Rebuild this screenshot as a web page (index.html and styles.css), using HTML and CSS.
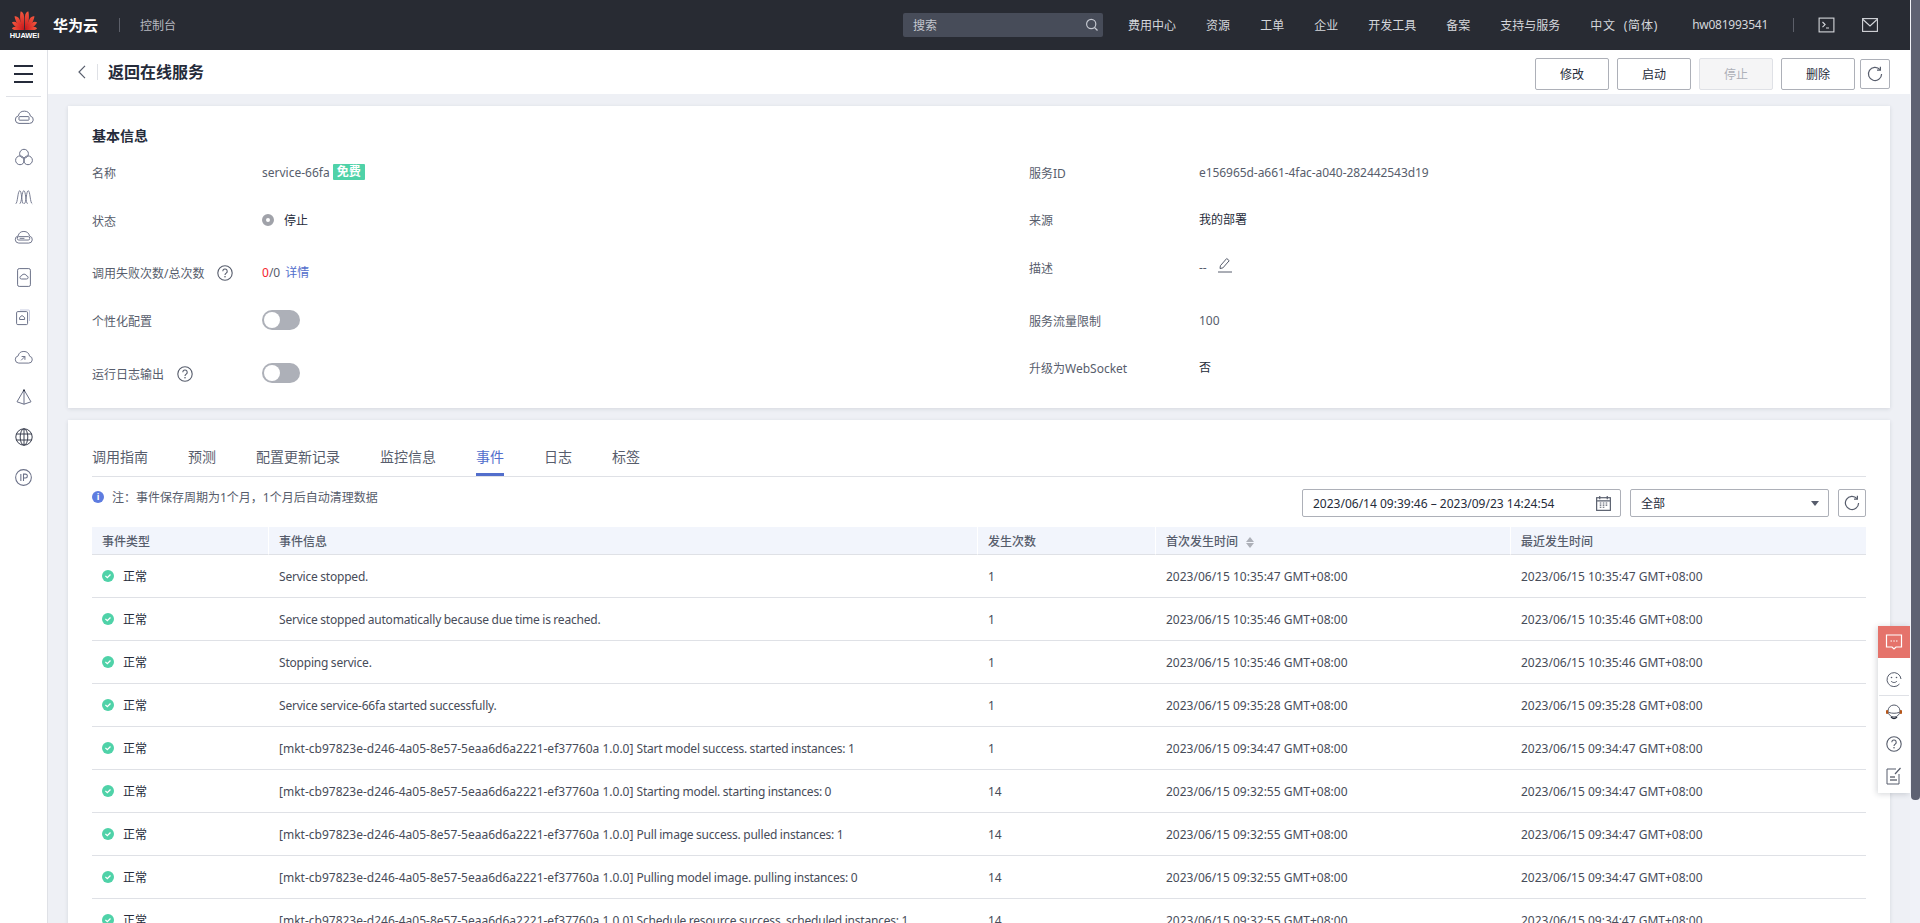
FILE: index.html
```html
<!DOCTYPE html>
<html lang="zh-CN">
<head>
<meta charset="utf-8">
<title>返回在线服务</title>
<link rel="stylesheet" href="styles.css">
</head>
<body>
<svg class="defs" width="0" height="0" aria-hidden="true">
  <symbol id="i-help" viewBox="0 0 16 16"><circle cx="8" cy="8" r="7.2" fill="none" stroke="currentColor" stroke-width="1.1"/><path d="M5.8 6.2a2.2 2.2 0 1 1 3.4 1.9c-.8.5-1.2.9-1.2 1.9" fill="none" stroke="currentColor" stroke-width="1.1"/><circle cx="8" cy="11.8" r=".8" fill="currentColor"/></symbol>
  <symbol id="i-ok" viewBox="0 0 12 12"><circle cx="6" cy="6" r="6" fill="#4fd2a8"/><path d="M3.4 5.9l1.9 1.8 3.2-3.2" fill="none" stroke="#fff" stroke-width="1.3"/></symbol>
  <symbol id="i-refresh" viewBox="0 0 16 16"><path d="M13 3.6A6.6 6.6 0 1 0 14.6 8" fill="none" stroke="currentColor" stroke-width="1.2"/><path d="M13.4 .8v3.4H10" fill="none" stroke="currentColor" stroke-width="1.2"/></symbol>
  <linearGradient id="petal" x1="0" y1="1" x2="0" y2="0"><stop offset="0" stop-color="#c8141a"/><stop offset="1" stop-color="#f4583f"/></linearGradient>
</svg>
<div class="app">
  <div class="page">
    <header class="topbar">
      <div class="brand">
        <div class="logo">
          <svg class="logo-mark" viewBox="-12.5 -19 25 19" width="25" height="19">
            <g fill="url(#petal)">
              <path d="M-.3 0C-3.300-5-3.400-12-1-18.800.2-18.800 2-16.500 1.700-13.500 1.300-9-.1-4-.3 0z" transform="rotate(-9)"/>
              <path d="M.3 0C3.300-5 3.400-12 1-18.800-.2-18.800-2-16.500-1.700-13.500-1.300-9 .1-4 .3 0z" transform="rotate(9)"/>
              <path d="M-.3 0C-3.300-4.500-3.400-10.500-1-16.800.2-16.800 2-14.500 1.700-12 1.300-8-.1-4-.3 0z" transform="rotate(-33)"/>
              <path d="M.3 0C3.300-4.500 3.400-10.500 1-16.800-.2-16.800-2-14.500-1.700-12-1.300-8 .1-4 .3 0z" transform="rotate(33)"/>
              <path d="M-.3 0C-3-4-3.100-9-1-14.500.2-14.500 2-12.500 1.700-10 1.300-7-.1-3.500-.3 0z" transform="rotate(-56)"/>
              <path d="M.3 0C3-4 3.100-9 1-14.500-.2-14.500-2-12.500-1.700-10-1.300-7 .1-3.500 .3 0z" transform="rotate(56)"/>
              <path d="M-.3 0C-2.600-3.500-2.700-7.500-1-12.500.2-12.500 1.800-10.500 1.500-8.500 1.200-5.500-.1-3-.3 0z" transform="rotate(-80)"/>
              <path d="M.3 0C2.600-3.500 2.700-7.500 1-12.500-.2-12.500-1.800-10.500-1.500-8.500-1.200-5.500 .1-3 .3 0z" transform="rotate(80)"/>
            </g>
          </svg>
          <span class="logo-text">HUAWEI</span>
        </div>
        <span class="brand-name">华为云</span>
        <span class="brand-sep"></span>
        <span class="brand-sub">控制台</span>
      </div>
      <div class="top-right">
        <div class="search">
          <span>搜索</span>
          <svg viewBox="0 0 14 14" width="14" height="14"><circle cx="6.200" cy="6" r="4.600" fill="none" stroke="#c4c7cf" stroke-width="1.200"/><path d="M9.500 9.500l3 3" stroke="#c4c7cf" stroke-width="1.200"/></svg>
        </div>
        <nav class="topnav">
          <a>费用中心</a><a>资源</a><a>工单</a><a>企业</a><a>开发工具</a><a>备案</a><a>支持与服务</a><a class="lang">中文 (简体)</a><a class="user">hw081993541</a>
        </nav>
        <span class="top-sep"></span>
        <svg class="top-ic" viewBox="0 0 16 16" width="17" height="16"><rect x=".6" y="1.100" width="14.800" height="13.800" fill="none" stroke="#d5d7dc" stroke-width="1.100"/><path d="M4 5l2.600 2.600L4 10.200M7.500 11h3" fill="none" stroke="#d5d7dc" stroke-width="1.100"/></svg>
        <svg class="top-ic mail" viewBox="0 0 16 16" width="16" height="16"><rect x=".6" y="1.600" width="14.800" height="12.800" fill="none" stroke="#d5d7dc" stroke-width="1.100"/><path d="M1 2.500l7 6.500 7-6.500" fill="none" stroke="#d5d7dc" stroke-width="1.100"/></svg>
      </div>
    </header>
    <div class="body-row">
      <aside class="sidebar">
        <div class="burger"><span></span><span></span><span></span></div>
        <div class="side-icons">
          <svg viewBox="0 0 20 14" width="20" height="14"><path d="M5 13.400h10.500a3.700 3.700 0 0 0 .9-7.300 6.200 6.200 0 0 0-12.100-.2A3.800 3.800 0 0 0 5 13.400z"/><rect x="5" y="6.600" width="10" height="3.600" rx=".5"/></svg>
          <svg viewBox="0 0 18 18" width="18" height="18"><circle cx="9" cy="5.700" r="4.400"/><circle cx="5" cy="12.300" r="4.400"/><circle cx="13" cy="12.300" r="4.400"/></svg>
          <svg viewBox="0 0 20 16" width="18" height="16"><path d="M.8 15.500C3 15 3 1 5.300 1s2 14 4 14.500M5.300 15.500C7.500 15 7.500 1 9.800 1s2 14 4.200 14.500M10.300 15.500C12.500 15 12.500 1 14.700 1s2 14 4.500 14.500"/></svg>
          <svg viewBox="0 0 20 14" width="19" height="14"><path d="M5 13.400h10.500a3.700 3.700 0 0 0 .9-7.300 6.200 6.200 0 0 0-12.100-.2A3.800 3.800 0 0 0 5 13.400z"/><rect x="3.500" y="6.600" width="13" height="3.600" rx="1.500"/><path d="M6 8.400h5"/></svg>
          <svg viewBox="0 0 14 19" width="14" height="19"><rect x=".6" y=".6" width="12.800" height="17.800" rx="1.600"/><path d="M4.500 11h5a1.500 1.500 0 0 0 .2-3 2.800 2.800 0 0 0-5.300 0 1.500 1.500 0 0 0 .1 3z"/></svg>
          <svg viewBox="0 0 16 16" width="16" height="16"><path d="M4 1h8.500a1 1 0 0 1 1 1v10" class="pale"/><rect x=".6" y="2.600" width="11" height="13" rx="1.200"/><path d="M3.600 10.500h5V8.500L6 6.500 3.600 8.500z"/></svg>
          <svg viewBox="0 0 20 14" width="19" height="14"><path d="M5 13.400h10.500a3.700 3.700 0 0 0 .9-7.300 6.200 6.200 0 0 0-12.100-.2A3.800 3.800 0 0 0 5 13.400z"/><path d="M7.500 10.500l4-4M8 6.500h3.500V10"/></svg>
          <svg viewBox="0 0 16 16" width="16" height="16"><path d="M8 .8L1 12.800 8 15.200l7-2.400zM8 .8v14.400"/><circle cx="8" cy="1.500" r="1" class="solid"/></svg>
          <svg viewBox="0 0 18 18" width="18" height="18"><circle cx="9" cy="9" r="8.200" class="dark"/><ellipse cx="9" cy="9" rx="3.800" ry="8.200" class="dark"/><path d="M1 6h16M1 12h16M9 1v16" class="dark"/></svg>
          <svg viewBox="0 0 16 16" width="17" height="17"><circle cx="8" cy="8" r="7.400"/><path d="M5.500 4.800v6.400M8 11.200V4.800h1.800a1.800 1.800 0 0 1 0 3.700H8"/></svg>
        </div>
      </aside>
      <main class="content">
        <div class="subhead">
          <div class="subhead-left">
            <svg class="chev" viewBox="0 0 8 14" width="8" height="14"><path d="M7 .8L1 7l6 6.200" fill="none" stroke="#575d6c" stroke-width="1.200"/></svg>
            <span class="chev-sep"></span>
            <h1 class="title">返回在线服务</h1>
          </div>
          <div class="actions">
            <button class="btn">修改</button>
            <button class="btn">启动</button>
            <button class="btn btn-off">停止</button>
            <button class="btn">删除</button>
            <button class="btn-ic btn-ic-head"><svg width="16" height="16"><use href="#i-refresh"/></svg></button>
          </div>
        </div>

        <section class="card info">
          <h2 class="card-title">基本信息</h2>
          <div class="info-grid">
            <div class="col col-l">
              <div class="kv"><span class="k">名称</span><span class="v">service-66fa<em class="tag">免费</em></span></div>
              <div class="kv"><span class="k">状态</span><span class="v v-dark"><i class="dot"></i>停止</span></div>
              <div class="kv"><span class="k k-help">调用失败次数/总次数<svg class="help" width="16" height="16"><use href="#i-help"/></svg></span><span class="v"><b class="red">0</b>/0<a class="link">详情</a></span></div>
              <div class="kv"><span class="k">个性化配置</span><span class="v v-sw"><i class="switch"></i></span></div>
              <div class="kv"><span class="k k-help">运行日志输出<svg class="help" width="16" height="16"><use href="#i-help"/></svg></span><span class="v v-sw"><i class="switch"></i></span></div>
            </div>
            <div class="col col-r">
              <div class="kv"><span class="k">服务ID</span><span class="v v-id">e156965d-a661-4fac-a040-282442543d19</span></div>
              <div class="kv"><span class="k">来源</span><span class="v v-dark">我的部署</span></div>
              <div class="kv"><span class="k">描述</span><span class="v">--<svg class="pen" viewBox="0 0 14 16" width="14" height="16"><path d="M2 11.500l.4-2.800L8.700 1.500l2.500 2.200-6.300 7.200z" fill="none" stroke="#575d6c"/><path d="M0 15h14" stroke="#575d6c"/></svg></span></div>
              <div class="kv"><span class="k">服务流量限制</span><span class="v">100</span></div>
              <div class="kv"><span class="k">升级为WebSocket</span><span class="v v-dark">否</span></div>
            </div>
          </div>
        </section>

        <section class="card events">
          <div class="tabs">
            <a>调用指南</a><a>预测</a><a>配置更新记录</a><a>监控信息</a><a class="active">事件</a><a>日志</a><a>标签</a>
          </div>
          <div class="toolbar">
            <div class="note"><i class="note-ic">i</i>注：事件保存周期为1个月，1个月后自动清理数据</div>
            <div class="filters">
              <div class="field date"><span>2023/06/14 09:39:46 – 2023/09/23 14:24:54</span>
                <svg viewBox="0 0 14 14" width="15" height="15"><rect x=".6" y="1.600" width="12.800" height="11.800" fill="none" stroke="#575d6c" stroke-width="1.100"/><path d="M3.500 0v3M10.500 0v3M1 4.500h12" stroke="#575d6c" stroke-width="1.100"/><path d="M3.500 6.500h1.500M6.300 6.500h1.500M9 6.500h1.500M3.500 8.500h1.500M6.300 8.500h1.500M9 8.500h1.500M3.500 10.500h1.500M6.300 10.500h1.500" stroke="#575d6c"/></svg>
              </div>
              <div class="field select"><span>全部</span><i class="caret"></i></div>
              <button class="btn-ic btn-ic-tool"><svg width="16" height="16"><use href="#i-refresh"/></svg></button>
            </div>
          </div>
          <table class="grid">
            <colgroup><col class="c1"><col class="c2"><col class="c3"><col class="c4"><col class="c5"></colgroup>
            <thead>
              <tr><th>事件类型</th><th>事件信息</th><th>发生次数</th><th>首次发生时间<i class="sort"></i></th><th>最近发生时间</th></tr>
            </thead>
            <tbody>
              <tr><td><span class="ok"><svg width="12" height="12"><use href="#i-ok"/></svg>正常</span></td><td><span class="prose">Service stopped.</span></td><td>1</td><td>2023/06/15 10:35:47 GMT+08:00</td><td>2023/06/15 10:35:47 GMT+08:00</td></tr>
              <tr><td><span class="ok"><svg width="12" height="12"><use href="#i-ok"/></svg>正常</span></td><td><span class="prose">Service stopped automatically because due time is reached.</span></td><td>1</td><td>2023/06/15 10:35:46 GMT+08:00</td><td>2023/06/15 10:35:46 GMT+08:00</td></tr>
              <tr><td><span class="ok"><svg width="12" height="12"><use href="#i-ok"/></svg>正常</span></td><td><span class="prose">Stopping service.</span></td><td>1</td><td>2023/06/15 10:35:46 GMT+08:00</td><td>2023/06/15 10:35:46 GMT+08:00</td></tr>
              <tr><td><span class="ok"><svg width="12" height="12"><use href="#i-ok"/></svg>正常</span></td><td><span class="prose">Service service-66fa started successfully.</span></td><td>1</td><td>2023/06/15 09:35:28 GMT+08:00</td><td>2023/06/15 09:35:28 GMT+08:00</td></tr>
              <tr><td><span class="ok"><svg width="12" height="12"><use href="#i-ok"/></svg>正常</span></td><td>[mkt-cb97823e-d246-4a05-8e57-5eaa6d6a2221-ef37760a 1.0.0] <span class="prose">Start model success. started instances: 1</span></td><td>1</td><td>2023/06/15 09:34:47 GMT+08:00</td><td>2023/06/15 09:34:47 GMT+08:00</td></tr>
              <tr><td><span class="ok"><svg width="12" height="12"><use href="#i-ok"/></svg>正常</span></td><td>[mkt-cb97823e-d246-4a05-8e57-5eaa6d6a2221-ef37760a 1.0.0] <span class="prose">Starting model. starting instances: 0</span></td><td>14</td><td>2023/06/15 09:32:55 GMT+08:00</td><td>2023/06/15 09:34:47 GMT+08:00</td></tr>
              <tr><td><span class="ok"><svg width="12" height="12"><use href="#i-ok"/></svg>正常</span></td><td>[mkt-cb97823e-d246-4a05-8e57-5eaa6d6a2221-ef37760a 1.0.0] <span class="prose">Pull image success. pulled instances: 1</span></td><td>14</td><td>2023/06/15 09:32:55 GMT+08:00</td><td>2023/06/15 09:34:47 GMT+08:00</td></tr>
              <tr><td><span class="ok"><svg width="12" height="12"><use href="#i-ok"/></svg>正常</span></td><td>[mkt-cb97823e-d246-4a05-8e57-5eaa6d6a2221-ef37760a 1.0.0] <span class="prose">Pulling model image. pulling instances: 0</span></td><td>14</td><td>2023/06/15 09:32:55 GMT+08:00</td><td>2023/06/15 09:34:47 GMT+08:00</td></tr>
              <tr><td><span class="ok"><svg width="12" height="12"><use href="#i-ok"/></svg>正常</span></td><td>[mkt-cb97823e-d246-4a05-8e57-5eaa6d6a2221-ef37760a 1.0.0] <span class="prose">Schedule resource success. scheduled instances: 1</span></td><td>14</td><td>2023/06/15 09:32:55 GMT+08:00</td><td>2023/06/15 09:34:47 GMT+08:00</td></tr>
            </tbody>
          </table>
        </section>
      </main>
    </div>
    <div class="float-panel">
      <div class="fp-top">
        <svg viewBox="0 0 18 18" width="18" height="18"><path d="M1.500 2h15v12h-5.500l-2 2-2-2H1.500z" fill="none" stroke="#fff" stroke-width="1.200"/><path d="M5.500 8h1.500M8.300 8h1.500M11 8h1.500" stroke="#fff" stroke-width="1.200"/></svg>
      </div>
      <div class="fp-item fp-face">
        <svg viewBox="0 0 16 16" width="16" height="16"><path d="M13.500 13A7 7 0 1 1 15 8" fill="none" stroke="#575d6c"/><circle cx="5.500" cy="6.500" r=".8" fill="#575d6c"/><circle cx="10.500" cy="6.500" r=".8" fill="#575d6c"/><path d="M5 10c1.500 2 4.500 2 6 0" fill="none" stroke="#575d6c"/></svg>
      </div>
      <div class="fp-item">
        <svg viewBox="0 0 18 18" width="18" height="18"><circle cx="9" cy="8" r="6" fill="none" stroke="#575d6c"/><path d="M4 9.500c3 1 7 1 10 0" fill="none" stroke="#575d6c"/><rect x="1" y="7" width="2.200" height="4" rx="1" fill="#b5561a"/><rect x="14.800" y="7" width="2.200" height="4" rx="1" fill="#b5561a"/><path d="M6 14c2 2 4 2 6 0" fill="none" stroke="#252b3a" stroke-width="1.300"/></svg>
      </div>
      <div class="fp-item">
        <svg width="16" height="16"><use href="#i-help"/></svg>
      </div>
      <div class="fp-item">
        <svg viewBox="0 0 16 18" width="16" height="18"><path d="M10 2H1v15h12V7" fill="none" stroke="#575d6c"/><path d="M14.500 1L9 7" stroke="#575d6c" stroke-width="1.200"/><path d="M4 10h5M4 13h7" stroke="#252b3a"/></svg>
      </div>
    </div>
  </div>
  <div class="scrollbar"><div class="thumb"></div></div>
</div>
</body>
</html>
```

FILE: styles.css
```css
* { box-sizing: border-box; }
html, body { margin: 0; height: 100%; overflow: hidden; }
body { font-family: "Noto Sans", "Noto Sans CJK SC", sans-serif; font-size: 12px; color: #575d6c; background: #eef0f5; }
.defs { position: absolute; }
a { color: inherit; text-decoration: none; }
em, i { font-style: normal; }
button { font: inherit; cursor: pointer; }

.app { display: flex; height: 923px; overflow: hidden; }
.page { position: relative; width: 1910px; flex: none; display: flex; flex-direction: column; height: 923px; overflow: hidden; }
.scrollbar { flex: none; width: 10px; background: #f0f2f8; }
.thumb { height: 800px; width: 9px; margin-left: 1px; background: #5e6273; border-radius: 0 0 4px 4px; }

/* top bar */
.topbar { flex: none; height: 50px; background: #282b33; display: flex; align-items: center; justify-content: space-between; color: #d5d7dc; }
.brand { display: flex; align-items: center; padding-left: 12px; }
.logo { width: 25px; display: flex; flex-direction: column; align-items: center; }
.logo-mark { display: block; margin-top: 1px; }
.logo-text { font-family: "Liberation Sans", sans-serif; font-size: 7.500px; font-weight: 700; color: #fff; line-height: 8px; margin-top: 2px; letter-spacing: -.1px; }
.brand-name { margin-left: 16px; font-size: 15px; font-weight: 700; color: #fff; line-height: 20px; }
.brand-sep { width: 1px; height: 14px; background: #5c5f69; margin: 0 20px 0 21px; }
.brand-sub { color: #b7b9c0; font-size: 12px; }
.top-right { display: flex; align-items: center; height: 50px; }
.search { width: 200px; height: 24px; background: #474c59; border-radius: 2px; display: flex; align-items: center; justify-content: space-between; padding: 0 4px 0 10px; color: #c4c7cf; }
.topnav { display: flex; margin-left: 25px; gap: 30px; white-space: nowrap; }
.topnav .lang { letter-spacing: .8px; word-spacing: 4px; }
.topnav .user { letter-spacing: -.25px; margin-left: 4px; }
.top-sep { width: 1px; height: 14px; background: #5c5f69; margin: 0 24px 0 25px; }
.top-ic { display: block; }
.mail { margin: 0 32px 0 27px; }

.body-row { flex: 1; display: flex; min-height: 0; }

/* sidebar */
.sidebar { flex: none; width: 48px; background: #fff; border-right: 1px solid #dfe1e6; }
.burger { height: 47px; margin: 0 6px; border-bottom: 1px solid #dfe1e6; padding: 15px 8px 0; display: flex; flex-direction: column; gap: 6px; }
.burger span { display: block; height: 2px; background: #252b3a; }
.side-icons { display: grid; grid-auto-rows: 40px; place-items: center; }
.side-icons svg { display: block; fill: none; stroke: #6b7188; stroke-width: 1; overflow: visible; }
.side-icons .pale { stroke: #c7cbe0; }
.side-icons .dark { stroke: #3b4050; }
.side-icons .solid { fill: #252b3a; stroke: none; }

/* content */
.content { flex: 1; min-width: 0; display: flex; flex-direction: column; }
.subhead { flex: none; height: 44px; background: #fff; display: flex; align-items: center; justify-content: space-between; padding-left: 30px; padding-right: 20px; }
.subhead-left { display: flex; align-items: center; }
.chev { display: block; }
.chev-sep { width: 1px; height: 16px; background: #dfe1e6; margin: 0 10px 0 11px; }
.title { margin: 0; font-size: 16px; font-weight: 700; color: #252b3a; line-height: 22px; }
.actions { display: flex; align-items: center; gap: 8px; margin-top: 4px; }
.btn { width: 74px; height: 32px; background: #fff; border: 1px solid #adb0b8; border-radius: 2px; color: #252b3a; font-size: 12px; padding: 0; }
.btn-off { background: #f5f5f6; border-color: #dfe1e6; color: #adb0b8; }
.btn-ic { background: #fff; border: 1px solid #adb0b8; border-radius: 2px; color: #575d6c; padding: 0; display: flex; align-items: center; justify-content: center; }
.btn-ic-head { width: 30px; height: 30px; margin-left: -3px; }
.btn-ic-tool { width: 28px; height: 28px; }

.card { background: #fff; margin: 0 20px; box-shadow: 0 1px 4px rgba(37, 43, 58, .12); flex: none; }
.info { margin-top: 12px; height: 302px; padding: 20px 24px 0; }
.card-title { margin: 0; font-size: 14px; font-weight: 700; color: #252b3a; line-height: 20px; }
.info-grid { display: grid; grid-template-columns: 937px 1fr; margin-top: 15px; }
.col { display: grid; }
.col-l { grid-template-rows: 48px 52px 48px 53px 40px; }
.col-r { grid-template-rows: 47px 48px 53px 47px 40px; }
.kv { display: flex; align-items: center; height: 22px; color: #575d6c; }
.k { width: 170px; flex: none; padding-top: 2px; display: flex; align-items: center; }
.v { color: #575d6c; display: flex; align-items: center; }
.v-dark { color: #252b3a; }
.v-id { letter-spacing: -.06px; }
.help { margin-left: 13px; color: #575d6c; }
.tag { margin-left: 3px; background: #4fd2a8; color: #fff; font-weight: 700; height: 16px; line-height: 16px; width: 32px; text-align: center; border-radius: 1px; }
.dot { width: 12px; height: 12px; border-radius: 50%; border: 4px solid #a0a2a9; margin-right: 10px; background: #fff; }
.red { color: #f5222d; font-weight: 400; }
.link { color: #526ecc; margin-left: 5px; }
.v-sw { height: 22px; }
.switch { position: relative; display: block; width: 38px; height: 20px; border-radius: 10px; background: #adb0b8; }
.switch::after { content: ""; position: absolute; left: 2px; top: 2px; width: 16px; height: 16px; border-radius: 50%; background: #fff; }
.pen { margin-left: 11px; margin-top: -4px; }

.events { margin-top: 12px; padding: 0 24px; flex: 1; }
.tabs { display: flex; height: 57px; align-items: flex-end; border-bottom: 1px solid #dfe1e6; font-size: 14px; gap: 40px; }
.tabs a { display: block; height: 29px; line-height: 20px; color: #575d6c; }
.tabs a.active { color: #526ecc; border-bottom: 3px solid #526ecc; }
.toolbar { display: flex; justify-content: space-between; align-items: flex-start; height: 50px; padding-top: 12px; }
.note { display: flex; align-items: center; height: 18px; margin-top: -1px; }
.note-ic { width: 12px; height: 12px; border-radius: 50%; background: #5e7ce0; color: #fff; font-size: 9px; font-weight: 700; line-height: 12px; text-align: center; margin-right: 8px; }
.filters { display: flex; gap: 9px; }
.field { height: 28px; border: 1px solid #adb0b8; border-radius: 2px; background: #fff; color: #252b3a; display: flex; align-items: center; justify-content: space-between; }
.date { width: 319px; padding: 0 9px 0 10px; }
.select { width: 199px; padding: 0 9px 0 10px; }
.caret { width: 0; height: 0; border-left: 4px solid transparent; border-right: 4px solid transparent; border-top: 5px solid #575d6c; }

.grid { width: 1774px; border-collapse: separate; border-spacing: 0; table-layout: fixed; }
.c1 { width: 176px; }
.c2 { width: 709px; }
.c3 { width: 178px; }
.c4 { width: 355px; }
.c5 { width: 356px; }
.grid th { height: 28px; background: #f2f5fc; border-bottom: 1px solid #dfe1e6; border-left: 1px solid #fff; text-align: left; color: #575d6c; padding: 0 0 0 10px; font-weight: 500; }
.grid th:first-child { border-left: 0; }
.grid td { height: 43px; border-bottom: 1px solid #dfe1e6; padding: 0 0 0 11px; color: #474c59; white-space: nowrap; overflow: hidden; }
.grid td:first-child { padding-left: 10px; }
.prose { letter-spacing: -.2px; word-spacing: -.3px; }
.sort { display: inline-block; vertical-align: middle; margin-left: 8px; width: 0; height: 0; border-left: 4px solid transparent; border-right: 4px solid transparent; border-bottom: 5px solid #adb0b8; position: relative; top: -3px; }
.sort::after { content: ""; position: absolute; left: -4px; top: 6px; border-left: 4px solid transparent; border-right: 4px solid transparent; border-top: 5px solid #adb0b8; }
.ok { display: flex; align-items: center; color: #252b3a; }
.ok svg { margin-right: 9px; }

/* floating side panel */
.float-panel { position: absolute; left: 1878px; top: 626px; width: 32px; height: 167px; background: #fff; box-shadow: -1px 1px 6px rgba(37, 43, 58, .2); display: flex; flex-direction: column; align-items: center; color: #575d6c; }
.fp-top { width: 32px; height: 32px; background: #e5736b; display: flex; align-items: center; justify-content: center; }
.fp-item { flex: none; height: 32px; width: 30px; display: flex; align-items: center; justify-content: center; }
.fp-item svg { display: block; }
.fp-face { margin-top: 5px; height: 33px; border-bottom: 1px solid #dfe1e6; }
```
